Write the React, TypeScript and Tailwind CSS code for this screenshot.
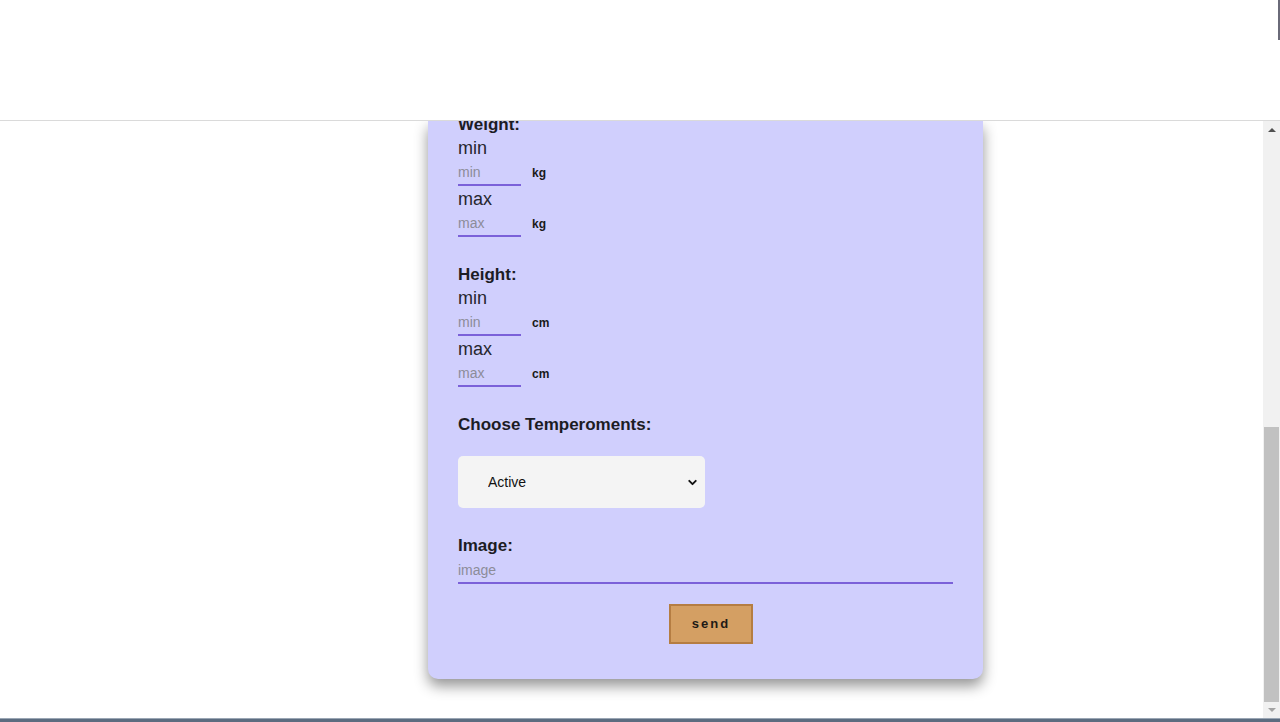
import { ChevronDown } from "lucide-react";

interface RangeFieldProps {
  title: string;
  unit: string;
  first?: boolean;
}

function RangeField({ title, unit, first }: RangeFieldProps): JSX.Element {
  return (
    <div className={first ? "flex flex-col -mt-[6px]" : "flex flex-col mt-[28px]"}>
      <label className="h-[20px] leading-[20px] text-[17px] font-bold text-[#1c1c24]">{title}</label>
      <span className="mt-[2px] h-[22px] leading-[22px] text-[18px] text-[#26262e]">min</span>
      <div className="mt-[1px] flex items-center">
        <input
          placeholder="min"
          className="w-[63px] h-[26px] border-b-2 border-[#7b61d9] bg-transparent text-[14px] outline-none placeholder:text-[#8c8c99]"
        />
        <span className="ml-[11px] -mt-[1px] text-[12px] font-bold text-[#1a1a1a]">{unit}</span>
      </div>
      <span className="mt-[2px] h-[22px] leading-[22px] text-[18px] text-[#26262e]">max</span>
      <div className="mt-[1px] flex items-center">
        <input
          placeholder="max"
          className="w-[63px] h-[26px] border-b-2 border-[#7b61d9] bg-transparent text-[14px] outline-none placeholder:text-[#8c8c99]"
        />
        <span className="ml-[11px] -mt-[1px] text-[12px] font-bold text-[#1a1a1a]">{unit}</span>
      </div>
    </div>
  );
}

export default function App(): JSX.Element {
  return (
    <div className="w-[1280px] h-[722px] overflow-hidden flex flex-col bg-white font-['Liberation_Sans',Arial,sans-serif]">
      <header className="relative h-[121px] shrink-0 border-b border-[#dadada] bg-white z-10">
        <div className="absolute right-0 top-0 w-[2px] h-[40px] bg-[#6a6a78]" />
      </header>

      <div className="flex h-[597px]">
        <main className="flex-1 overflow-hidden">
          <form className="ml-[428px] w-[555px] bg-[#d0cffd] rounded-b-[10px] shadow-[0_7px_14px_rgba(0,0,0,0.42)] px-[30px] pb-[35px] flex flex-col">
            <RangeField title="Weight:" unit="kg" first />
            <RangeField title="Height:" unit="cm" />

            <label className="mt-[28px] h-[20px] leading-[20px] text-[17px] font-bold text-[#1c1c24]">
              Choose Temperoments:
            </label>
            <div className="relative mt-[21px] w-[247px] h-[52px]">
              <select className="appearance-none w-full h-full rounded-[5px] bg-[#f4f4f4] pl-[30px] text-[14px] text-[#111] outline-none">
                <option>Active</option>
              </select>
              <ChevronDown
                size={13}
                strokeWidth={3.5}
                className="absolute right-[6px] top-[20px] text-[#111] pointer-events-none"
              />
            </div>

            <label className="mt-[28px] h-[20px] leading-[20px] text-[17px] font-bold text-[#1c1c24]">Image:</label>
            <input
              placeholder="image"
              className="mt-[2px] w-full h-[26px] border-b-2 border-[#7b61d9] bg-transparent text-[14px] outline-none placeholder:text-[#8c8c99]"
            />

            <button
              type="button"
              className="mt-[20px] ml-[211px] w-[84px] h-[40px] bg-[#d49f63] border-2 border-[#b57d42] text-[13px] font-bold tracking-[2px] text-[#1e1a16]"
            >
              send
            </button>
          </form>
        </main>

        <aside className="w-[17px] shrink-0 bg-[#f1f1f1] flex flex-col items-center">
          <div className="h-[17px] flex items-center justify-center">
            <div className="w-0 h-0 border-l-[4px] border-r-[4px] border-b-[4px] border-l-transparent border-r-transparent border-b-[#505050]" />
          </div>
          <div className="mt-[289px] w-[15px] h-[275px] bg-[#c1c1c1]" />
          <div className="flex-1 flex items-center justify-center">
            <div className="w-0 h-0 border-l-[4px] border-r-[4px] border-t-[4px] border-l-transparent border-r-transparent border-t-[#a3a3a3]" />
          </div>
        </aside>
      </div>

      <div className="h-[4px] shrink-0 bg-[#5c6c80] border-t border-[#9aa6b4]" />
    </div>
  );
}
